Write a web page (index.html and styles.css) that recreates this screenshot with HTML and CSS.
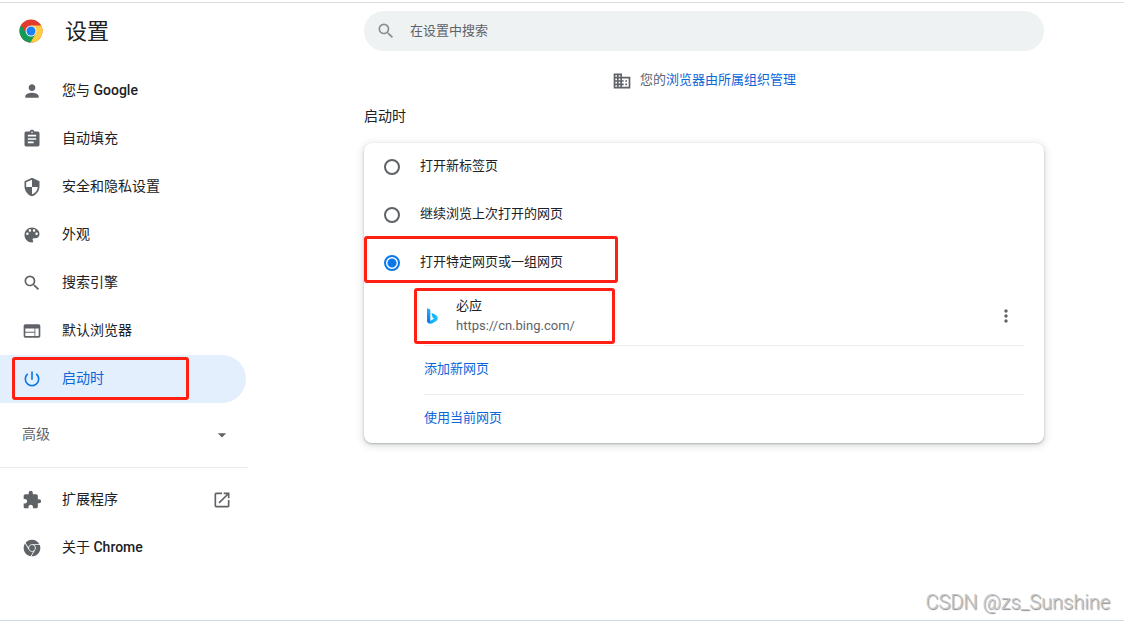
FILE: index.html
```html
<!DOCTYPE html>
<html lang="zh-CN">
<head>
<meta charset="utf-8">
<meta name="viewport" content="width=device-width, initial-scale=1">
<title>设置</title>
<link rel="stylesheet" href="styles.css">
</head>
<body>
<div class="page">
  <aside class="sidebar">
    <header class="brand">
      <svg class="logo" viewBox="0 0 24 24" aria-hidden="true">
        <circle cx="12" cy="12" r="11.500" fill="#e33b2e"/>
        <path fill="#0f9d58" d="M2.200 6A11.500 11.500 0 0 0 11.400 23.500L16.800 14.700H7.200Z"/>
        <path fill="#ffcd40" d="M12 6.500H22.100A11.500 11.500 0 0 1 11.400 23.500L16.800 14.700Z"/>
        <circle cx="12" cy="12" r="5.500" fill="#f1f1f1"/>
        <circle cx="12" cy="12" r="4.500" fill="#1a82f7"/>
      </svg>
      <h1 class="title">设置</h1>
    </header>
    <nav class="menu">
      <a class="item" href="#people"><svg class="icon" viewBox="0 0 24 24" aria-hidden="true"><path d="M12 12c2.21 0 4-1.79 4-4s-1.79-4-4-4-4 1.79-4 4 1.79 4 4 4zm0 2c-2.67 0-8 1.34-8 4v2h16v-2c0-2.66-5.33-4-8-4z"/></svg><span class="label">您与 <b class="latin">Google</b></span></a>
      <a class="item" href="#autofill"><svg class="icon" viewBox="0 0 24 24" aria-hidden="true"><path d="M19 3h-4.18C14.4 1.84 13.3 1 12 1c-1.3 0-2.4.84-2.82 2H5c-1.1 0-2 .9-2 2v14c0 1.1.9 2 2 2h14c1.1 0 2-.9 2-2V5c0-1.1-.9-2-2-2zm-7 0c.55 0 1 .45 1 1s-.45 1-1 1-1-.45-1-1 .45-1 1-1zm2 14H7v-2h7v2zm3-4H7v-2h10v2zm0-4H7V7h10v2z"/></svg><span class="label">自动填充</span></a>
      <a class="item" href="#privacy"><svg class="icon" viewBox="0 0 24 24" aria-hidden="true"><path d="M12 1L3 5v6c0 5.55 3.84 10.74 9 12 5.16-1.26 9-6.45 9-12V5l-9-4zm0 10.99h7c-.53 4.12-3.28 7.79-7 8.94V12H5V6.3l7-3.11v8.8z"/></svg><span class="label">安全和隐私设置</span></a>
      <a class="item" href="#appearance"><svg class="icon" viewBox="0 0 24 24" aria-hidden="true"><path d="M12 3c-4.97 0-9 4.03-9 9s4.03 9 9 9c.83 0 1.5-.67 1.5-1.5 0-.39-.15-.74-.39-1.01-.23-.26-.38-.61-.38-.99 0-.83.67-1.5 1.5-1.5H16c2.76 0 5-2.24 5-5 0-4.42-4.03-8-9-8zm-5.5 9c-.83 0-1.5-.67-1.5-1.5S5.67 9 6.5 9 8 9.67 8 10.5 7.33 12 6.5 12zm3-4C8.67 8 8 7.33 8 6.5S8.67 5 9.5 5s1.5.67 1.5 1.5S10.33 8 9.5 8zm5 0c-.83 0-1.5-.67-1.5-1.5S13.67 5 14.5 5s1.5.67 1.5 1.5S15.33 8 14.5 8zm3 4c-.83 0-1.5-.67-1.5-1.5S16.67 9 17.5 9s1.5.67 1.5 1.5-.67 1.5-1.5 1.5z"/></svg><span class="label">外观</span></a>
      <a class="item" href="#search"><svg class="icon" viewBox="0 0 24 24" aria-hidden="true"><path d="M15.5 14h-.79l-.28-.27A6.471 6.471 0 0 0 16 9.5 6.5 6.5 0 1 0 9.5 16c1.61 0 3.09-.59 4.23-1.57l.27.28v.79l5 4.99L20.49 19l-4.99-5zm-6 0C7.01 14 5 11.99 5 9.5S7.01 5 9.5 5 14 7.01 14 9.5 11.99 14 9.5 14z"/></svg><span class="label">搜索引擎</span></a>
      <a class="item" href="#default"><svg class="icon" viewBox="0 0 24 24" aria-hidden="true"><path d="M20 4H4c-1.1 0-1.99.9-1.99 2L2 18c0 1.1.9 2 2 2h16c1.1 0 2-.9 2-2V6c0-1.1-.9-2-2-2zm-5 14H4v-4h11v4zm0-5H4V9h11v4zm5 5h-4V9h4v9z"/></svg><span class="label">默认浏览器</span></a>
      <a class="item selected" href="#startup" aria-current="page"><svg class="icon" viewBox="0 0 24 24" aria-hidden="true"><path d="M13 3h-2v10h2V3zm4.83 2.17l-1.42 1.42A6.92 6.92 0 0 1 19 12c0 3.87-3.13 7-7 7s-7-3.13-7-7c0-2.19 1.01-4.14 2.58-5.42L6.17 5.17A8.932 8.932 0 0 0 3 12a9 9 0 0 0 18 0c0-2.74-1.23-5.18-3.17-6.83z"/></svg><span class="label">启动时</span><span class="mark mark-menu"></span></a>
    </nav>
    <button class="advanced" type="button"><span class="label">高级</span><svg class="icon" viewBox="0 0 24 24" aria-hidden="true"><path d="M7 10l5 5 5-5z"/></svg></button>
    <nav class="menu extra">
      <a class="item" href="#extensions"><svg class="icon" viewBox="0 0 24 24" aria-hidden="true"><path d="M20.5 11H19V7c0-1.1-.9-2-2-2h-4V3.5a2.5 2.5 0 0 0-5 0V5H4c-1.1 0-1.99.9-1.99 2v3.8H3.5c1.49 0 2.7 1.21 2.7 2.7s-1.21 2.7-2.7 2.7H2V20c0 1.1.9 2 2 2h3.8v-1.5c0-1.49 1.21-2.7 2.7-2.7s2.7 1.21 2.7 2.7V22H17c1.1 0 2-.9 2-2v-4h1.5a2.5 2.5 0 0 0 0-5z"/></svg><span class="label">扩展程序</span><svg class="icon external" viewBox="0 0 24 24" aria-hidden="true"><path d="M19 19H5V5h7V3H5a2 2 0 0 0-2 2v14a2 2 0 0 0 2 2h14c1.1 0 2-.9 2-2v-7h-2v7zM14 3v2h3.59l-9.83 9.83 1.41 1.41L19 6.41V10h2V3h-7z"/></svg></a>
      <a class="item" href="#about"><svg class="icon" viewBox="0 0 24 24" aria-hidden="true"><path d="M12 7.5h8.9C19.3 4.2 15.9 2 12 2 8.9 2 6.1 3.4 4.3 5.6l3.3 5.7C8 9.1 9.8 7.5 12 7.5zM12 16.5c-1.7 0-3.1-.9-3.9-2.3L3.6 6.5C2.6 8.1 2 10 2 12c0 5 3.6 9.1 8.4 9.9l3.2-5.6c-.5.1-1 .2-1.6.2zM16.5 12c0 .8-.2 1.6-.6 2.2L11.4 22h.6c5.5 0 10-4.5 10-10 0-1.2-.2-2.4-.6-3.5h-6.6c1 .8 1.7 2.1 1.7 3.5z"/><circle cx="12" cy="12" r="3.5"/></svg><span class="label">关于 <b class="latin">Chrome</b></span></a>
    </nav>
  </aside>
  <main class="main">
    <div class="content">
      <label class="search">
        <svg class="icon" viewBox="0 0 24 24" aria-hidden="true"><path d="M15.5 14h-.79l-.28-.27A6.471 6.471 0 0 0 16 9.5 6.5 6.5 0 1 0 9.5 16c1.61 0 3.09-.59 4.23-1.57l.27.28v.79l5 4.99L20.49 19l-4.99-5zm-6 0C7.01 14 5 11.99 5 9.5S7.01 5 9.5 5 14 7.01 14 9.5 11.99 14 9.5 14z"/></svg>
        <input class="search-input" type="search" placeholder="在设置中搜索" aria-label="在设置中搜索">
      </label>
      <p class="managed">
        <svg class="icon" viewBox="0 0 24 24" aria-hidden="true"><path d="M12 7V3H2v18h20V7H12zM6 19H4v-2h2v2zm0-4H4v-2h2v2zm0-4H4V9h2v2zm0-4H4V5h2v2zm4 12H8v-2h2v2zm0-4H8v-2h2v2zm0-4H8V9h2v2zm0-4H8V5h2v2zm10 12h-8v-2h2v-2h-2v-2h2v-2h-2V9h8v10zm-2-8h-2v2h2v-2zm0 4h-2v2h2v-2z"/></svg>
        <span class="label">您的<a class="link" href="#management">浏览器由所属组织管理</a></span>
      </p>
      <h2 class="section-title">启动时</h2>
      <section class="card">
        <label class="option"><input class="radio" type="radio" name="startup"><span class="label">打开新标签页</span></label>
        <label class="option"><input class="radio" type="radio" name="startup"><span class="label">继续浏览上次打开的网页</span></label>
        <label class="option"><input class="radio" type="radio" name="startup" checked><span class="label">打开特定网页或一组网页</span><span class="mark mark-option"></span></label>
        <div class="pages">
          <div class="site">
            <svg class="favicon" viewBox="0 0 16 16" aria-hidden="true">
              <defs>
                <linearGradient id="stem" x1="0" y1="0" x2="0" y2="1"><stop offset="0" stop-color="#24b4fa"/><stop offset="1" stop-color="#0a70ee"/></linearGradient>
                <linearGradient id="bowl" x1="0" y1="0" x2="1" y2="0"><stop offset="0" stop-color="#0c9df5"/><stop offset="1" stop-color="#1fc4f7"/></linearGradient>
              </defs>
              <path fill="url(#bowl)" d="M7.4 4.8 11.500 6.800Q13.800 8 13.800 10.200 13.800 12 12.300 13L8.500 15.300Q6.500 16.300 4.600 15.200 3 14.200 3 12.400L6.200 13 10.200 10.600 8.600 9.600Z"/>
              <path fill="url(#stem)" d="M3 .2 6.300 1.500V13.400L5 15.400Q3 14.600 3 12.500Z"/>
            </svg>
            <div class="site-text"><span class="site-name">必应</span><span class="site-url">https://cn.bing.com/</span></div>
            <button class="more" type="button" aria-label="更多操作"><svg class="icon" viewBox="0 0 24 24" aria-hidden="true"><path d="M12 8c1.1 0 2-.9 2-2s-.9-2-2-2-2 .9-2 2 .9 2 2 2zm0 2c-1.1 0-2 .9-2 2s.9 2 2 2 2-.9 2-2-.9-2-2-2zm0 6c-1.1 0-2 .9-2 2s.9 2 2 2 2-.9 2-2-.9-2-2-2z"/></svg></button>
            <span class="mark mark-site"></span>
          </div>
          <div class="action"><a class="link label" href="#add">添加新网页</a></div>
          <div class="action"><a class="link label" href="#current">使用当前网页</a></div>
        </div>
      </section>
    </div>
  </main>
  <div class="watermark">CSDN @zs_Sunshine</div>
</div>
</body>
</html>
```
FILE: styles.css
```css
* {
  box-sizing: border-box;
}

body {
  margin: 0;
  background: #fff;
  color: #202124;
  font: 13px/20px Roboto, "Noto Sans CJK SC", sans-serif;
}

.page {
  position: relative;
  display: flex;
  min-height: 100vh;
  padding-top: 1px;
  border-bottom: 1px solid #cfdbe8;
}

.page::before {
  content: "";
  position: absolute;
  inset: 2px 0 auto;
  height: 1px;
  background: #dadce0;
}

.sidebar {
  flex: 0 0 284px;
}

.brand {
  display: flex;
  align-items: center;
  gap: 22px;
  height: 66px;
  padding: 0 19px 6px;
}

.logo {
  width: 24px;
  height: 24px;
}

.title {
  margin: 0;
  padding-top: 2px;
  font-size: 22px;
  font-weight: 400;
  line-height: 32px;
}

.icon {
  flex: none;
  width: 20px;
  height: 20px;
  fill: #5f6368;
}

.label {
  padding-bottom: 2px;
}

.latin {
  font-weight: 500;
}

.item {
  position: relative;
  display: flex;
  align-items: center;
  gap: 20px;
  width: 246px;
  height: 48px;
  padding: 0 14px 0 22px;
  border-radius: 0 24px 24px 0;
  color: #202124;
  font-size: 14px;
  text-decoration: none;
}

.selected {
  background: #e3effd;
  color: #0b66d8;
}

.selected .icon {
  fill: #0b78ea;
}

.external {
  margin-left: auto;
}

.advanced {
  display: flex;
  align-items: center;
  justify-content: space-between;
  width: 246px;
  height: 48px;
  margin: 8px 0;
  padding: 0 14px 0 22px;
  border: 0;
  background: none;
  color: #5f6368;
  font: inherit;
  font-size: 14px;
}

.extra {
  width: 248px;
  padding-top: 8px;
  border-top: 1px solid #e8eaed;
}

.main {
  display: flex;
  flex: 1;
  justify-content: center;
  padding-top: 10px;
}

.content {
  flex: 0 1 680px;
}

.search {
  display: flex;
  align-items: center;
  gap: 14px;
  height: 40px;
  padding: 0 12px;
  border-radius: 20px;
  background: #eef2f3;
}

.search .icon {
  fill: #8b8f93;
}

.search-input {
  flex: 1;
  min-width: 0;
  padding: 0;
  border: 0;
  outline: 0;
  background: none;
  color: #202124;
  font: inherit;
}

.search-input::placeholder {
  color: #5f6368;
}

.managed {
  display: flex;
  align-items: center;
  justify-content: center;
  gap: 8px;
  margin: 19px 0 14px;
  color: #5f6368;
}

.link {
  color: #0b66d8;
  text-decoration: none;
}

.section-title {
  margin: 0 0 17px;
  font-size: 14px;
  font-weight: 400;
  line-height: 20px;
}

.card {
  border-radius: 8px;
  box-shadow: 0 1px 2px rgba(60, 64, 67, 0.3), 0 2px 6px 2px rgba(60, 64, 67, 0.15);
}

.option {
  position: relative;
  display: flex;
  align-items: center;
  gap: 20px;
  height: 48px;
  padding: 0 20px;
}

.radio {
  appearance: none;
  width: 16px;
  height: 16px;
  margin: 0;
  border: 2px solid #5f6368;
  border-radius: 50%;
}

.radio:checked {
  border-color: #0b78ea;
  background: radial-gradient(circle, #0b78ea 4px, transparent 5px);
}

.pages {
  margin: 0 20px 0 60px;
}

.site {
  position: relative;
  display: flex;
  align-items: center;
  gap: 16px;
  height: 58px;
}

.favicon {
  width: 16px;
  height: 16px;
}

.site-text {
  display: flex;
  flex: 1;
  flex-direction: column;
}

.site-url {
  color: #5f6368;
}

.more {
  display: flex;
  padding: 8px;
  border: 0;
  background: none;
}

.action {
  display: flex;
  align-items: center;
  height: 49px;
  border-top: 1px solid #ebedef;
}

.mark {
  position: absolute;
  border: 3px solid #ff1f13;
  border-radius: 3px;
  pointer-events: none;
}

.mark-menu {
  inset: 2px 57px 3px 12px;
}

.mark-option {
  inset: -3px auto 4px 0;
  width: 254px;
}

.mark-site {
  inset: 1px auto 1px -10px;
  width: 201px;
}

.watermark {
  position: absolute;
  right: 14px;
  bottom: 6px;
  color: #c4c6c8;
  font: 300 20px/24px Roboto, sans-serif;
  text-shadow: 1px 1px 1px #85878a;
}
```
